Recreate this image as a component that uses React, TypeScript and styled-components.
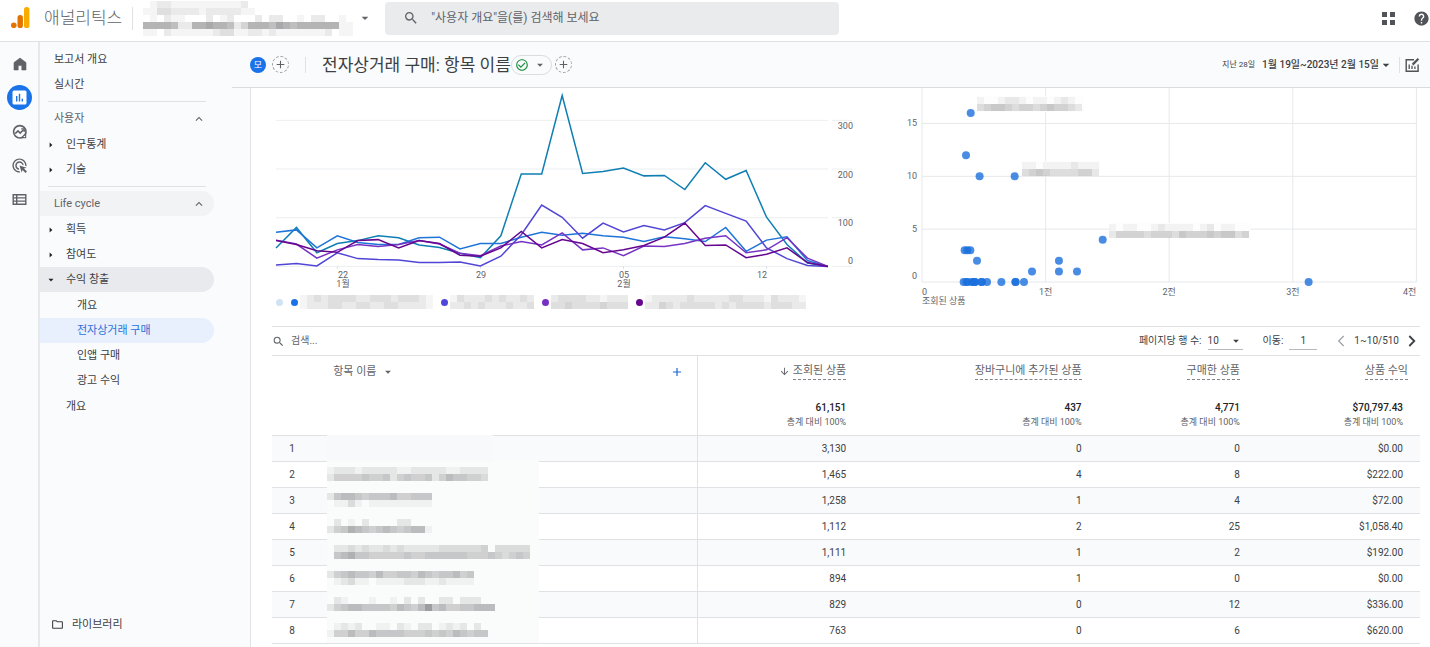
import React from "react";
import styled, { createGlobalStyle, css } from "styled-components";
import {
  MdAdd,
  MdArrowDownward,
  MdArrowDropDown,
  MdCheckCircleOutline,
  MdExpandLess,
  MdHelp,
  MdSearch,
  MdAdsClick,
  MdOutlineFolder,
} from "react-icons/md";

const GlobalStyle = createGlobalStyle`
  *, *::before, *::after { box-sizing: border-box; }
  body {
    margin: 0;
    background: #fff;
    color: #3c4043;
    font-family: Roboto, "Noto Sans CJK KR", sans-serif;
    font-size: 11px;
    line-height: 16px;
  }
  button, input, select { font: inherit; color: inherit; border: 0; padding: 0; margin: 0; background: none; }
  button { cursor: pointer; }
  ul { list-style: none; margin: 0; padding: 0; }
  a { color: inherit; text-decoration: none; }
  svg { display: block; flex: none; }
`;

/* ---------- pixelated names ---------- */

const CELL = 7;

const MosaicCells = ({ rows, x = 0, y = 0 }: { rows: string[]; x?: number; y?: number }) => (
  <g shapeRendering="crispEdges">
    {rows.flatMap((row, r) =>
      row.split("").map((level, c) =>
        level === "." ? null : (
          <rect
            key={`${r}-${c}`}
            x={x + c * CELL}
            y={y + r * CELL}
            width={CELL}
            height={CELL}
            fill="#202024"
            fillOpacity={Number(level) * 0.048}
          />
        )
      )
    )}
  </g>
);

const Mosaic = ({ rows }: { rows: string[] }) => {
  const width = Math.max(...rows.map((r) => r.length)) * CELL;
  return (
    <svg width={width} height={rows.length * CELL} aria-hidden="true">
      <MosaicCells rows={rows} />
    </svg>
  );
};

/* ---------- page frame ---------- */

const Page = styled.div`
  min-height: 100vh;
  display: flex;
  flex-direction: column;
`;

const TopBar = styled.header`
  display: flex;
  align-items: center;
  height: 42px;
  padding: 0 0 5px 11px;
  border-bottom: 1px solid #dfe1e3;
`;

const Product = styled.span`
  margin-left: 14px;
  font-size: 17px;
  line-height: 24px;
  font-weight: 300;
  color: #5f6368;
  white-space: nowrap;
`;

const Rule = styled.span<{ $height: number; $gap: number }>`
  flex: none;
  width: 1px;
  height: ${(p) => p.$height}px;
  margin: 0 ${(p) => p.$gap}px;
  background: #dfe1e4;
`;

const PropertyButton = styled.button`
  display: flex;
  align-items: center;
  gap: 4px;
  height: 36px;
  overflow: hidden;
  color: #5f6368;
`;

const SearchBox = styled.label`
  display: flex;
  align-items: center;
  gap: 12px;
  flex: 0 1 454px;
  height: 33px;
  margin-left: 12px;
  padding: 0 18px;
  border-radius: 4px;
  background: #e9ebed;
  color: #5f6368;
  input {
    flex: 1;
    min-width: 0;
    font-size: 12px;
    outline: 0;
  }
  input::placeholder { color: #5f6368; opacity: 1; }
`;

const TopActions = styled.div`
  display: flex;
  align-items: center;
  gap: 18px;
  margin-left: auto;
  color: #505357;
`;

const IconButton = styled.button`
  display: flex;
  align-items: center;
  justify-content: center;
`;

const Body = styled.div`
  display: flex;
  flex: 1;
`;

/* ---------- navigation ---------- */

const Rail = styled.nav`
  display: flex;
  flex-direction: column;
  align-items: center;
  gap: 9px;
  flex: none;
  width: 40px;
  padding-top: 9px;
  padding-left: 1px;
  background: #f9fbfc;
  border-right: 2px solid #e6e8ea;
`;

const RailLink = styled.a<{ $active?: boolean }>`
  display: flex;
  align-items: center;
  justify-content: center;
  width: 25px;
  height: 25px;
  border-radius: 50%;
  color: ${(p) => (p.$active ? "#fff" : "#5f6368")};
  background: ${(p) => (p.$active ? "#1a73e8" : "none")};
`;

const Sidebar = styled.nav`
  display: flex;
  flex-direction: column;
  flex: none;
  width: 210px;
  padding: 5px 36px 10px 0;
  background: #f9fbfc;
`;

const rowStyle = css`
  display: flex;
  align-items: center;
  width: 100%;
  height: 25px;
  border-radius: 0 13px 13px 0;
  text-align: left;
`;

const NavLink = styled.a<{ $indent: number; $selected?: boolean }>`
  ${rowStyle}
  padding-left: ${(p) => p.$indent}px;
  background: ${(p) => (p.$selected ? "#e8f0fe" : "none")};
  color: ${(p) => (p.$selected ? "#2b6fd6" : "#3c4043")};
`;

const NavToggle = styled.button<{ $open?: boolean }>`
  ${rowStyle}
  gap: 12px;
  padding-left: 8px;
  background: ${(p) => (p.$open ? "#e8eaed" : "none")};
`;

const NavHeading = styled.button<{ $shaded?: boolean }>`
  ${rowStyle}
  justify-content: space-between;
  padding: 0 8px 0 14px;
  color: #5f6368;
  background: ${(p) => (p.$shaded ? "#f1f3f4" : "none")};
`;

const NavDivider = styled.hr`
  width: 158px;
  height: 1px;
  margin: 4px 8px;
  border: 0;
  background: #dfe1e4;
`;

const NavList = styled.ul`
  margin-top: 1px;
`;

const Library = styled.a`
  display: flex;
  align-items: center;
  gap: 8px;
  height: 25px;
  margin-top: auto;
  padding-left: 11px;
`;

/* ---------- report ---------- */

const Main = styled.main`
  display: flex;
  flex-direction: column;
  flex: 1;
  min-width: 0;
`;

const TitleBar = styled.div`
  display: flex;
  align-items: center;
  height: 46px;
  margin-left: -18px;
  padding: 0 10px 0 18px;
  background: #f9fbfc;
  border-bottom: 1px solid #d9dcdf;
  white-space: nowrap;
`;

const Avatar = styled.span`
  display: flex;
  align-items: center;
  justify-content: center;
  width: 16px;
  height: 16px;
  border-radius: 50%;
  background: #1a73e8;
  color: #fff;
  font-size: 9px;
  line-height: 12px;
`;

const AddButton = styled(IconButton)<{ $gap: number }>`
  width: 17px;
  height: 17px;
  margin-left: ${(p) => p.$gap}px;
  border: 1px dashed #9aa0a6;
  border-radius: 50%;
  color: #5f6368;
`;

const Title = styled.h1`
  margin: 0;
  font-size: 17px;
  line-height: 24px;
  font-weight: 400;
  color: #3c4043;
`;

const StatusButton = styled(IconButton)`
  gap: 4px;
  width: 41px;
  height: 20px;
  border: 1px solid #dadce0;
  border-radius: 10px;
  color: #5f6368;
`;

const DateButton = styled.button`
  display: flex;
  align-items: center;
  gap: 7px;
  margin-left: auto;
  font-size: 10px;
  font-weight: 500;
  small {
    font-size: 8px;
    font-weight: 400;
  }
  svg { margin-left: -8px; }
`;

const Card = styled.section`
  flex: 1;
  padding: 0 10px 0 21px;
  border-left: 1px solid #e1e3e6;
  background: #fff;
`;

const Charts = styled.div`
  display: grid;
  grid-template-columns: minmax(0, 590fr) minmax(0, 530fr);
  column-gap: 28px;
  padding-bottom: 16px;
`;

const Plot = styled.svg`
  width: 100%;
  height: auto;
  text {
    font-size: 9px;
    fill: #5f6368;
  }
`;

const Legend = styled.ul`
  display: flex;
  align-items: center;
  gap: 8px;
  height: 16px;
  padding-left: 4px;
  li {
    display: flex;
    align-items: center;
    gap: 2px;
  }
`;

const Dot = styled.span<{ $color: string }>`
  width: 7px;
  height: 7px;
  border-radius: 50%;
  background: ${(p) => p.$color};
`;

const Toolbar = styled.div`
  display: flex;
  align-items: center;
  height: 30px;
  border-top: 1px solid #dfe1e4;
  border-bottom: 1px solid #dfe1e4;
  font-size: 10px;
  white-space: nowrap;
`;

const TableSearch = styled.label`
  display: flex;
  align-items: center;
  gap: 6px;
  flex: 1;
  color: #5f6368;
  input { outline: 0; width: 200px; }
  input::placeholder { color: #5f6368; opacity: 1; }
`;

const Field = styled.label`
  display: flex;
  align-items: center;
  gap: 6px;
  margin-right: 20px;
`;

const SelectWrap = styled.span`
  display: flex;
  align-items: center;
  width: 35px;
  border-bottom: 1px solid #b5b8bc;
  select {
    flex: 1;
    min-width: 0;
    appearance: none;
    outline: 0;
  }
`;

const PageInput = styled.input`
  width: 28px;
  height: 17px;
  border-bottom: 1px solid #b5b8bc;
  text-align: center;
  outline: 0;
`;

const Pager = styled.div`
  display: flex;
  align-items: center;
  gap: 9px;
  padding-right: 4px;
`;

const Table = styled.table`
  width: 100%;
  table-layout: fixed;
  border-collapse: separate;
  border-spacing: 0;
  font-size: 10px;
  th, td { padding: 0; font-weight: 400; }
`;

const Col = styled.col<{ $share?: number }>`
  width: ${(p) => (p.$share ? `${p.$share}%` : "auto")};
`;

const NumberHead = styled.th`
  border-bottom: 1px solid #dfe1e4;
`;

const NameHead = styled.th`
  border-right: 1px solid #dfe1e4;
  border-bottom: 1px solid #dfe1e4;
  vertical-align: top;
  > div {
    display: flex;
    align-items: center;
    justify-content: space-between;
    padding: 8px 13px 0 21px;
    font-size: 11px;
    color: #5f6368;
  }
  button { display: flex; align-items: center; gap: 5px; }
`;

const MetricHead = styled.th`
  height: 39px;
  vertical-align: top;
  text-align: right;
  font-size: 11px;
  color: #5f6368;
  > button {
    display: inline-flex;
    align-items: center;
    gap: 3px;
    margin: 7px 17px 0 0;
  }
  &:last-child > button { margin-right: 12px; }
  span { border-bottom: 1px dashed #80868b; }
`;

const Total = styled.td`
  height: 41px;
  border-bottom: 1px solid #dfe1e4;
  text-align: right;
  line-height: 14px;
  b {
    display: block;
    padding-right: 17px;
    font-weight: 500;
    color: #202124;
  }
  span {
    display: block;
    padding-right: 17px;
    font-size: 9px;
    color: #5f6368;
  }
`;

const Row = styled.tr`
  &:nth-child(odd) { background: #f8fafb; }
  td {
    height: 26px;
    border-bottom: 1px solid #dfe1e4;
  }
`;

const IndexCell = styled.td`
  text-align: center;
`;

const NameCell = styled.td`
  position: relative;
  border-right: 1px solid #dfe1e4;
`;

/* The pixelation patch also hides the row lines behind the name. */
const Veil = styled.div<{ $short?: boolean }>`
  position: absolute;
  top: -1px;
  left: 15px;
  display: flex;
  align-items: center;
  width: ${(p) => (p.$short ? 166 : 212)}px;
  max-width: 90%;
  height: 26px;
  overflow: hidden;
  background: ${(p) => (p.$short ? "#f8f9fa" : "#fafbfb")};
`;

const ValueCell = styled.td`
  && { padding-right: 17px; }
  text-align: right;
`;

/* ---------- icons ---------- */

const Logo = () => (
  <svg width="19" height="22" viewBox="0 0 19 22" aria-hidden="true">
    <rect x="13" y="0" width="5.4" height="21" rx="2.6" fill="#f9ab00" />
    <rect x="6.5" y="8" width="5.4" height="13" rx="2.6" fill="#e37400" />
    <circle cx="2.8" cy="18.2" r="2.8" fill="#e37400" />
  </svg>
);

const HomeIcon = () => (
  <svg width="16" height="16" viewBox="0 0 16 16" fill="currentColor" aria-hidden="true">
    <path d="M2 6.6 8 2l6 4.6V14h-4.2V9.6H6.2V14H2z" stroke="currentColor" strokeLinejoin="round" strokeWidth=".6" />
  </svg>
);

const ReportIcon = () => (
  <svg width="15" height="15" viewBox="0 0 15 15" aria-hidden="true">
    <rect x=".5" y=".5" width="14" height="14" rx="1.5" fill="#fff" />
    <path d="M4.7 6v5.5M7.5 3.8v7.7M10.3 8.8v2.7" stroke="#1a73e8" strokeWidth="1.4" />
  </svg>
);

const ExploreIcon = () => (
  <svg width="16" height="16" viewBox="0 0 16 16" fill="none" stroke="currentColor" aria-hidden="true">
    <circle cx="7.8" cy="7.8" r="6.2" strokeWidth="1.6" />
    <path d="M14.2 8v6.3H8.5z" fill="currentColor" stroke="none" />
    <path d="M3.2 9.6 6 6.9l2.2 2.2 3.5-3.6" strokeWidth="1.5" />
    <path d="M9.2 4.9h3v3" strokeWidth="1.3" />
    <circle cx="12.4" cy="12.5" r=".8" fill="#f9fbfc" stroke="none" />
  </svg>
);

const ListIcon = () => (
  <svg width="15" height="13" viewBox="0 0 15 13" fill="none" stroke="currentColor" aria-hidden="true">
    <path d="M1.2 1.7h12.6v9.6H1.2zM4.7 1.7v9.6M1.2 4.9h12.6M1.2 8.1h12.6" strokeWidth="1.4" />
  </svg>
);

const GridIcon = () => (
  <svg width="13" height="13" viewBox="0 0 13 13" fill="currentColor" aria-hidden="true">
    <path d="M0 0h5v5H0zM8 0h5v5H8zM0 8h5v5H0zM8 8h5v5H8z" />
  </svg>
);

const EditChartIcon = () => (
  <svg width="15" height="16" viewBox="0 0 15 16" fill="none" stroke="#505357" aria-hidden="true">
    <path d="M9 2.7H1.2v11.6h11.9V7.5" strokeWidth="1.4" />
    <path d="M4.2 7.6v4.5M7 8.8v3.3M9.9 9.6v2.5" strokeWidth="1.3" />
    <path d="M7.6 7.6 13.4 1.8" strokeWidth="2.2" />
  </svg>
);

const Triangle = ({ open }: { open?: boolean }) => (
  <svg width="6" height="6" viewBox="0 0 6 6" fill="#202124" aria-hidden="true">
    <path d={open ? "M.5 1.8h5L3 4.6z" : "M1.6.5v5L4.4 3z"} />
  </svg>
);

const Chevron = ({ next }: { next?: boolean }) => (
  <svg width="8" height="12" viewBox="0 0 8 12" fill="none" aria-hidden="true">
    <path
      d={next ? "M1.3 1 6.3 6l-5 5" : "M6.7 1 1.7 6l5 5"}
      stroke={next ? "#3c4043" : "#9aa0a6"}
      strokeWidth={next ? 1.8 : 1.2}
    />
  </svg>
);

/* ---------- data ---------- */

const series = [
  { color: "#0f7fb3", values: [38, 80, 28, 47, 53, 63, 59, 44, 39, 27, 18, 63, 190, 190, 351, 191, 195, 202, 186, 187, 158, 213, 179, 197, 101, 45, 7, 0] },
  { color: "#1f74d8", values: [70, 75, 38, 63, 49, 45, 45, 59, 60, 36, 47, 47, 60, 70, 64, 68, 63, 60, 51, 61, 57, 51, 80, 31, 54, 61, 12, 0] },
  { color: "#5145d6", values: [3, 6, 1, 28, 16, 14, 13, 8, 8, 9, 1, 21, 65, 126, 101, 58, 89, 71, 84, 75, 90, 125, 109, 93, 38, 16, 2, 0] },
  { color: "#7633c4", values: [54, 46, 17, 34, 45, 41, 45, 53, 46, 27, 22, 42, 51, 44, 69, 34, 38, 22, 42, 41, 47, 58, 63, 28, 34, 59, 17, 0] },
  { color: "#66068f", values: [53, 45, 32, 29, 53, 55, 38, 53, 47, 23, 21, 38, 72, 38, 55, 47, 28, 34, 43, 60, 89, 43, 44, 18, 25, 38, 8, 0] },
];

const dayTicks = [
  { day: 3, label: "22", month: "1월", x: 71 },
  { day: 10, label: "29", x: 209 },
  { day: 17, label: "05", month: "2월", x: 352 },
  { day: 24, label: "12", x: 490 },
];

const legend = [
  { color: "#d0e3f5", rows: [] as string[] },
  { color: "#1a73e8", rows: ["1232333322333233321", "1222332233223322221"] },
  { color: "#4f46dc", rows: ["132223232232", "223232223223"] },
  { color: "#7630c4", rows: ["23333221222", "33433334333"] },
  { color: "#66068f", rows: ["12222232222233222132221", "22432333332323333233322"] },
];

const scatter: [number, number][] = [
  [394, 16], [356, 12], [466, 10], [750, 10], [1462, 4],
  [345, 3], [367, 3], [391, 3], [445, 2], [1108, 2],
  [890, 1], [1108, 1], [1254, 1],
  [337, 0], [359, 0], [370, 0], [405, 0], [415, 0], [426, 0], [430, 0], [480, 0], [485, 0], [526, 0],
  [642, 0], [755, 0], [758, 0], [825, 0], [3128, 0],
];

const columns = ["조회된 상품", "장바구니에 추가된 상품", "구매한 상품", "상품 수익"];
const totals = ["61,151", "437", "4,771", "$70,797.43"];

const rows = [
  { name: [] as string[], values: ["3,130", "0", "0", "$0.00"] },
  { name: ["12221222221122222112222", "24444544524544524655443"], values: ["1,465", "4", "8", "$222.00"] },
  { name: ["256654555644555", ".1131.111111111"], values: ["1,258", "1", "4", "$72.00"] },
  { name: [".2.1.2....22.", "245765456545661"], values: ["1,112", "2", "25", "$1,058.40"] },
  { name: [".2232322323222223333334.33333", ".5675544444544555555444543454"], values: ["1,111", "1", "2", "$192.00"] },
  { name: ["245655464455465455645", ".12311.11112221121111"], values: ["894", "1", "0", "$0.00"] },
  { name: [".21...1..1.2.2..22.222.", "245665555465469564455666"], values: ["829", "0", "12", "$336.00"] },
  { name: [".1212..11.21.22.1212.2", "14464465555444545465455"], values: ["763", "0", "6", "$620.00"] },
];

/* ---------- charts ---------- */

const LineChart = () => {
  const px = (i: number) => 4 + i * 20.44;
  const py = (v: number) => 178.4 - v * 0.4867;
  return (
    <Plot viewBox="0 0 590 206" role="img" aria-label="시간 경과에 따른 조회된 상품">
      {[0, 100, 200, 300].map((v) => (
        <g key={v}>
          <path d={`M4 ${py(v)}H556M560 ${py(v)}H580`} stroke="#eceef0" />
          <text x="581" y={v ? py(v) + 8.5 : py(v) - 2} textAnchor="end">{v}</text>
        </g>
      ))}
      {dayTicks.map((t) => (
        <g key={t.day}>
          <path d={`M${px(t.day)} 178v3`} stroke="#dfe1e4" />
          <text x={t.x} y="190" textAnchor="middle">{t.label}</text>
          {t.month && <text x={t.x} y="199" textAnchor="middle">{t.month}</text>}
        </g>
      ))}
      {series.map((s) => (
        <polyline
          key={s.color}
          points={s.values.map((v, i) => `${px(i)},${py(v)}`).join(" ")}
          fill="none"
          stroke={s.color}
          strokeWidth="1.5"
        />
      ))}
    </Plot>
  );
};

const ScatterChart = () => {
  const px = (v: number) => 32 + v * 0.1236;
  const py = (v: number) => 194 - v * 10.57;
  return (
    <Plot viewBox="0 0 530 222" role="img" aria-label="조회된 상품별 산점도">
      <g stroke="#e6e8ea">
        {[0, 1000, 2000, 3000, 4000].map((v) => <path key={v} d={`M${px(v)} 0V194`} />)}
        {[0, 5, 10, 15].map((v) => <path key={v} d={`M32 ${py(v)}H${px(4000)}`} />)}
      </g>
      {[0, 5, 10, 15].map((v) => (
        <text key={v} x="27" y={v ? py(v) + 3 : py(v) - 3} textAnchor="end">{v}</text>
      ))}
      <text x="32" y="207">0</text>
      <text x={px(1000)} y="207" textAnchor="middle">1전</text>
      <text x={px(2000)} y="207" textAnchor="middle">2전</text>
      <text x={px(3000)} y="207" textAnchor="middle">3전</text>
      <text x={px(4000)} y="207" textAnchor="end">4전</text>
      <text x="32" y="216">조회된 상품</text>
      <rect x="87" y="8" width="107" height="16" fill="#fdfdfd" />
      <rect x="132" y="73" width="78" height="14" fill="#fdfdfd" />
      <rect x="219" y="135" width="142" height="14" fill="#fdfdfd" />
      <MosaicCells x={87} y={9} rows={["1..1221.11.121", "345543443454432"]} />
      <MosaicCells x={132} y={74} rows={["11.11112111", "34543333442"]} />
      <MosaicCells x={219} y={136} rows={["1.11..121111.12.11", "24444344435444545534"]} />
      {scatter.map(([x, y], i) => (
        <circle key={i} cx={px(x)} cy={py(y)} r="4" fill="#1a6fdc" fillOpacity=".8" />
      ))}
    </Plot>
  );
};

/* ---------- app ---------- */

export default function App() {
  return (
    <Page>
      <GlobalStyle />
      <TopBar>
        <Logo />
        <Product>애널리틱스</Product>
        <Rule $height={23} $gap={10} />
        <PropertyButton aria-label="속성 선택">
          <Mosaic
            rows={[
              ".12211111111112",
              "1133222212222211",
              ".1.211...2.12...2.22..1.22..1",
              "777762277877624777687677777711",
              "11.211111123311221211111112.11",
            ]}
          />
          <MdArrowDropDown size={16} />
        </PropertyButton>
        <SearchBox>
          <MdSearch size={16} />
          <input type="search" aria-label="검색" placeholder={'"사용자 개요"을(를) 검색해 보세요'} />
        </SearchBox>
        <TopActions>
          <IconButton aria-label="앱"><GridIcon /></IconButton>
          <IconButton aria-label="도움말"><MdHelp size={17} /></IconButton>
        </TopActions>
      </TopBar>

      <Body>
        <Rail aria-label="기본 메뉴">
          <RailLink href="#home" aria-label="홈"><HomeIcon /></RailLink>
          <RailLink href="#reports" aria-label="보고서" $active><ReportIcon /></RailLink>
          <RailLink href="#explore" aria-label="탐색"><ExploreIcon /></RailLink>
          <RailLink href="#ads" aria-label="광고"><MdAdsClick size={17} /></RailLink>
          <RailLink href="#configure" aria-label="구성"><ListIcon /></RailLink>
        </Rail>

        <Sidebar aria-label="보고서 메뉴">
          <NavLink href="#snapshot" $indent={14}>보고서 개요</NavLink>
          <NavLink href="#realtime" $indent={14}>실시간</NavLink>
          <NavDivider />
          <NavHeading>사용자<MdExpandLess size={14} /></NavHeading>
          <NavList>
            <li><NavToggle><Triangle />인구통계</NavToggle></li>
            <li><NavToggle><Triangle />기술</NavToggle></li>
          </NavList>
          <NavDivider />
          <NavHeading $shaded>Life cycle<MdExpandLess size={14} /></NavHeading>
          <NavList>
            <li><NavToggle><Triangle />획득</NavToggle></li>
            <li><NavToggle><Triangle />참여도</NavToggle></li>
            <li>
              <NavToggle $open><Triangle open />수익 창출</NavToggle>
              <NavList>
                <li><NavLink href="#overview" $indent={37}>개요</NavLink></li>
                <li><NavLink href="#ecommerce" $indent={37} $selected>전자상거래 구매</NavLink></li>
                <li><NavLink href="#in-app" $indent={37}>인앱 구매</NavLink></li>
                <li><NavLink href="#ad-revenue" $indent={37}>광고 수익</NavLink></li>
              </NavList>
            </li>
          </NavList>
          <NavList>
            <li><NavLink href="#retention" $indent={26}>개요</NavLink></li>
          </NavList>
          <Library href="#library"><MdOutlineFolder size={13} />라이브러리</Library>
        </Sidebar>

        <Main>
          <TitleBar>
            <Avatar>모</Avatar>
            <AddButton $gap={6} aria-label="비교 추가"><MdAdd size={13} /></AddButton>
            <Rule $height={16} $gap={16} />
            <Title>전자상거래 구매: 항목 이름</Title>
            <StatusButton aria-label="데이터 상태">
              <MdCheckCircleOutline size={14} color="#1e8e3e" />
              <MdArrowDropDown size={14} />
            </StatusButton>
            <AddButton $gap={3} aria-label="필터 추가"><MdAdd size={13} /></AddButton>
            <DateButton>
              <small>지난 28일</small>
              <span>1월 19일~2023년 2월 15일</span>
              <MdArrowDropDown size={16} />
            </DateButton>
            <Rule $height={16} $gap={5} />
            <IconButton aria-label="보고서 맞춤설정"><EditChartIcon /></IconButton>
          </TitleBar>

          <Card>
            <Charts>
              <div>
                <LineChart />
                <Legend>
                  {legend.map((item) => (
                    <li key={item.color}>
                      <Dot $color={item.color} />
                      {item.rows.length > 0 && <Mosaic rows={item.rows} />}
                    </li>
                  ))}
                </Legend>
              </div>
              <ScatterChart />
            </Charts>

            <Toolbar>
              <TableSearch>
                <MdSearch size={13} />
                <input type="text" aria-label="표 검색" placeholder="검색..." />
              </TableSearch>
              <Field>
                페이지당 행 수:
                <SelectWrap>
                  <select defaultValue="10">
                    <option>10</option>
                    <option>25</option>
                  </select>
                  <MdArrowDropDown size={14} />
                </SelectWrap>
              </Field>
              <Field>
                이동:
                <PageInput type="text" defaultValue="1" />
              </Field>
              <Pager>
                <IconButton aria-label="이전"><Chevron /></IconButton>
                <span>1~10/510</span>
                <IconButton aria-label="다음"><Chevron next /></IconButton>
              </Pager>
            </Toolbar>

            <Table>
              <colgroup>
                <Col $share={3.5} />
                <Col $share={33.6} />
                <Col $share={14.4} />
                <Col $share={20.5} />
                <Col $share={13.8} />
                <Col />
              </colgroup>
              <thead>
                <tr>
                  <NumberHead rowSpan={2} aria-label="번호" />
                  <NameHead rowSpan={2}>
                    <div>
                      <button>항목 이름<MdArrowDropDown size={14} /></button>
                      <IconButton aria-label="측정기준 추가"><MdAdd size={14} color="#1967d2" /></IconButton>
                    </div>
                  </NameHead>
                  {columns.map((label, i) => (
                    <MetricHead key={label}>
                      <button>
                        {i === 0 && <MdArrowDownward size={11} />}
                        <span>{label}</span>
                      </button>
                    </MetricHead>
                  ))}
                </tr>
                <tr>
                  {totals.map((total) => (
                    <Total key={total}>
                      <b>{total}</b>
                      <span>총계 대비 100%</span>
                    </Total>
                  ))}
                </tr>
              </thead>
              <tbody>
                {rows.map((row, i) => (
                  <Row key={i}>
                    <IndexCell>{i + 1}</IndexCell>
                    <NameCell>
                      <Veil $short={i === 0}>{row.name.length > 0 && <Mosaic rows={row.name} />}</Veil>
                    </NameCell>
                    {row.values.map((value, c) => (
                      <ValueCell key={c}>{value}</ValueCell>
                    ))}
                  </Row>
                ))}
              </tbody>
            </Table>
          </Card>
        </Main>
      </Body>
    </Page>
  );
}
